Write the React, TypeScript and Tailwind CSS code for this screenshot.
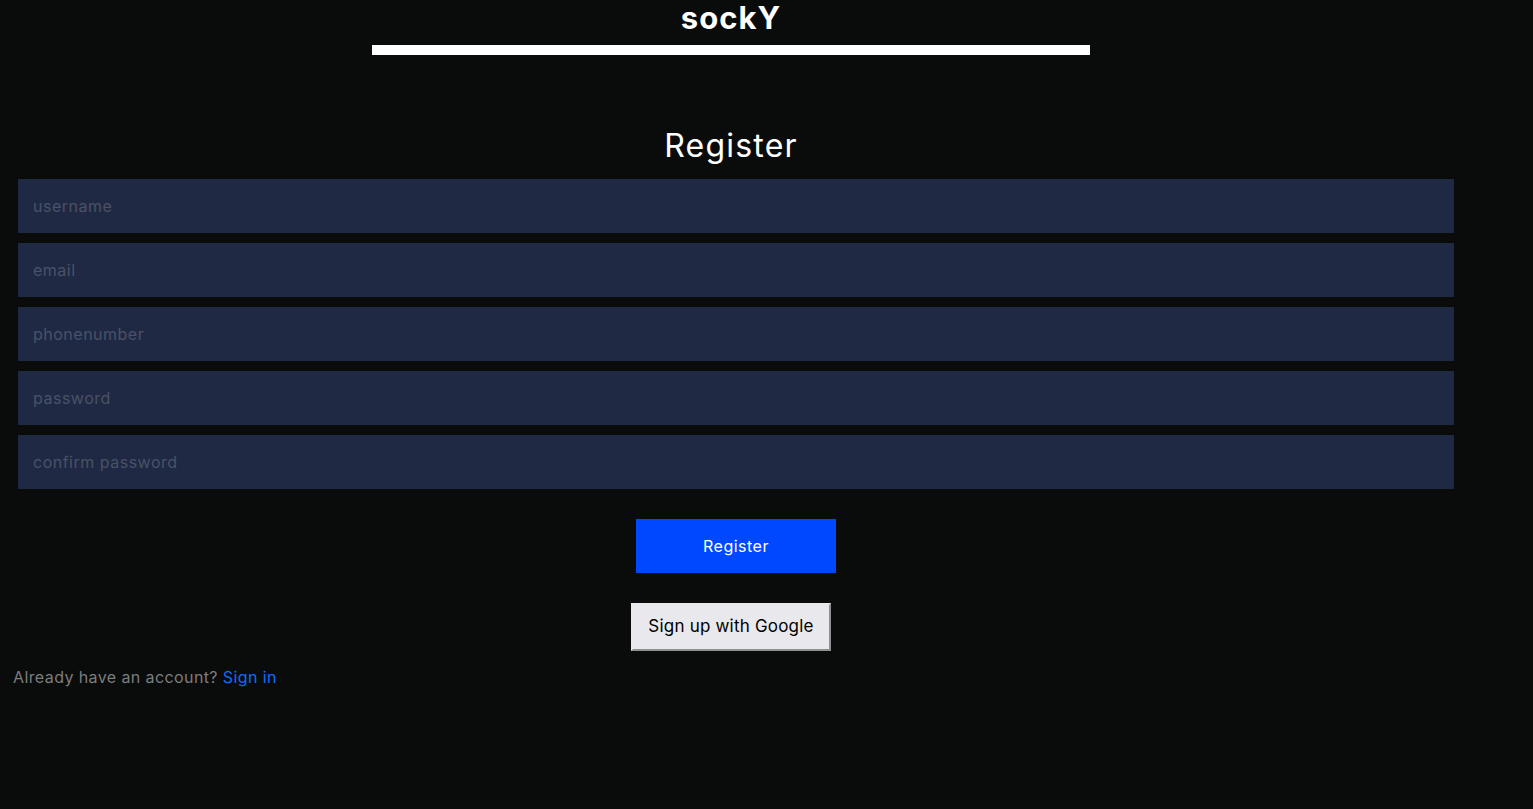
export default function App() {
    const fields = ['username', 'email', 'phonenumber', 'password', 'confirm password'];

    return (
        <div className="min-h-screen bg-[#0a0c0c] font-['Inter',sans-serif]">
            <div className="w-[1462px] flex flex-col items-center">
                {/* brand */}
                <h1 className="text-[31px] leading-[36px] font-bold tracking-[1px] text-white">sockY</h1>
                <div className="mt-[9px] h-[10px] w-[718px] bg-white" />

                <h2 className="mt-[71px] text-[32px] leading-[40px] tracking-[1.2px] text-white">Register</h2>

                <form className="mt-[13px] w-full flex flex-col items-center">
                    <div className="w-full pl-[18px] pr-[8px] flex flex-col gap-[10px]">
                        {fields.map((f) => (
                            <input
                                key={f}
                                type={f.includes('password') ? 'password' : 'text'}
                                placeholder={f}
                                className="h-[54px] w-full bg-[#1f2944] px-[15px] text-[16px] tracking-[0.5px] text-white placeholder:text-[#4b5166] outline-none"
                            />
                        ))}
                    </div>

                    <button
                        type="button"
                        className="mt-[30px] ml-[10px] h-[54px] w-[200px] bg-[#0048ff] text-[16px] tracking-[0.5px] text-white"
                    >
                        Register
                    </button>

                    <button
                        type="button"
                        className="mt-[30px] h-[48px] w-[200px] bg-[#e9e9ed] border-2 border-t-[#e9e9ed] border-l-[#e9e9ed] border-r-[#8f8f8f] border-b-[#8f8f8f] text-[17px] tracking-[0.2px] text-black"
                    >
                        Sign up with Google
                    </button>
                </form>

                <p className="self-start mt-[14px] pl-[13px] text-[16px] leading-[24px] tracking-[0.4px] text-[#7d7d7d]">
                    Already have an account? <a className="text-[#0a6cff]">Sign in</a>
                </p>
            </div>
        </div>
    );
}
